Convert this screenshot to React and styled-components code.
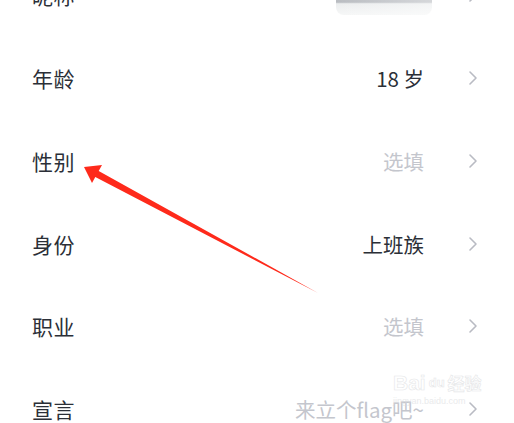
import React from "react";
import styled, { createGlobalStyle } from "styled-components";

const Global = createGlobalStyle`
  html, body { margin: 0; padding: 0; background: #fff; }
  body { width: 514px; height: 423px; overflow: hidden; font-family: "Noto Sans CJK SC", "Noto Sans", sans-serif; }
`;

const Page = styled.div`
  position: relative;
  width: 514px;
  height: 423px;
  overflow: hidden;
  background: #fff;
`;

const List = styled.div`
  display: flex;
  flex-direction: column;
  margin-top: -46px;
`;

const Row = styled.div`
  height: 82.75px;
  display: flex;
  align-items: center;
  padding: 0 36px 0 32px;
`;

const Label = styled.div`
  flex: 1;
  font-size: 21px;
  color: #2b2f37;
  letter-spacing: 0.5px;
`;

const Value = styled.div`
  font-size: 20.5px;
  color: ${(p) => (p.$muted ? "#c4c6cd" : "#2b2f37")};
  margin-right: 44px;
  white-space: nowrap;
`;

const Blur = styled.div`
  width: 96px;
  height: 40px;
  margin-right: 36px;
  border-radius: 8px;
  background: linear-gradient(90deg, rgba(255,255,255,0) 0%, rgba(255,255,255,0.4) 100%),
    linear-gradient(180deg, #c9ccd0 0%, #b9bcc1 68%, #eceeef 72%, #f6f7f7 100%);
`;

const Chevron = () => (
  <svg width="10" height="16" viewBox="0 0 10 16" fill="none">
    <path d="M2 2 L8 8 L2 14" stroke="#b9bbc3" strokeWidth="1.6" strokeLinecap="round" strokeLinejoin="round" />
  </svg>
);

const Overlay = styled.svg`
  position: absolute;
  left: 0;
  top: 0;
  pointer-events: none;
`;

const Watermark = styled.div`
  position: absolute;
  left: 393px;
  top: 372px;
  font-family: "Liberation Sans", sans-serif;
  line-height: 1;
  opacity: 0.55;
`;

const WmTop = styled.div`
  display: flex;
  align-items: center;
  gap: 3px;
  font-size: 21px;
  font-weight: 700;
  -webkit-text-stroke: 0.6px #d0d2d5;
  color: #fff;
`;

const WmCn = styled.span`
  font-family: "Noto Sans CJK SC", sans-serif;
  font-size: 17px;
`;

const WmUrl = styled.div`
  font-size: 9px;
  margin-top: 4px;
  color: #d8d9dc;
`;

const rows = [
  { label: "年龄", value: "18 岁" },
  { label: "性别", value: "选填", muted: true },
  { label: "身份", value: "上班族" },
  { label: "职业", value: "选填", muted: true },
  { label: "宣言", value: "来立个flag吧~", muted: true },
];

export default function App() {
  return (
    <Page>
      <Global />
      <List>
        <Row>
          <Label>昵称</Label>
          <Blur />
          <Chevron />
        </Row>
        {rows.map((r) => (
          <Row key={r.label}>
            <Label>{r.label}</Label>
            <Value $muted={r.muted}>{r.value}</Value>
            <Chevron />
          </Row>
        ))}
      </List>
      <Watermark>
        <WmTop>
          <span>Bai</span>
          <span style={{ fontSize: 13 }}>du</span>
          <WmCn>经验</WmCn>
        </WmTop>
        <WmUrl>jingyan.baidu.com</WmUrl>
      </Watermark>
      <Overlay width="514" height="423" viewBox="0 0 514 423">
        <polygon
          points="84,167 102,165 98.7,170.9 318,293 95.3,177.1 92,183"
          fill="#fe2a1b"
        />
      </Overlay>
    </Page>
  );
}
